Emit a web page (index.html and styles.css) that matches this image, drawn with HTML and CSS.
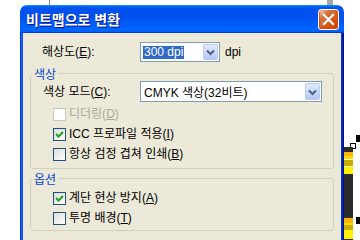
FILE: index.html
```html
<!DOCTYPE html>
<html lang="ko">

<head>
    <meta charset="UTF-8" />
    <title>비트맵으로 변환</title>
    <link rel="stylesheet" href="styles.css">
</head>

<body>
    <div class="desk">
        <!-- bits of the drawing behind the dialog -->
        <div class="guide guide-left"></div>
        <div class="guide guide-right"></div>
        <div class="handle handle-top"></div>
        <div class="node"></div>
        <div class="handle handle-bottom"></div>
        <div class="strip">
            <div class="band dark" style="height:5px"></div>
            <div class="band orange" style="height:4px"></div>
            <div class="band gold" style="height:3px"></div>
            <div class="band pale" style="height:1px"></div>
            <div class="band ochre" style="height:6px"></div>
            <div class="band pale" style="height:1px"></div>
            <div class="band yellow" style="height:7px"></div>
            <div class="band dark" style="height:44px"></div>
            <div class="band orange" style="height:5px"></div>
            <div class="band gold" style="height:2px"></div>
            <div class="band ochre" style="height:5px"></div>
            <div class="band yellow" style="height:9px"></div>
        </div>

        <div class="window">
            <div class="titlebar">
                <span class="title">비트맵으로 변환</span>
                <button class="close" aria-label="닫기">
                    <svg width="19" height="19" viewBox="0 0 19 19">
                        <path d="M5 5 L14 14 M14 5 L5 14" stroke="#fff" stroke-width="2.2" stroke-linecap="square" />
                    </svg>
                </button>
            </div>
            <div class="window-body">
                <div class="top-row">
                    <label class="label res-label">해상도(<u>E</u>):</label>
                    <div class="combo combo-dpi">
                        <span class="combo-text"><span class="selected">300 dpi</span></span>
                        <span class="combo-btn">
                            <svg width="13" height="14" viewBox="0 0 13 14">
                                <path d="M3 5.5 L6.5 9 L10 5.5" fill="none" stroke="#4d6185" stroke-width="2" />
                            </svg>
                        </span>
                    </div>
                    <span class="unit">dpi</span>
                </div>

                <fieldset class="group group-color">
                    <legend>색상</legend>
                    <div class="mode-row">
                        <label class="label mode-label">색상 모드(<u>C</u>):</label>
                        <div class="combo combo-mode">
                            <span class="combo-text">CMYK 색상(32비트)</span>
                            <span class="combo-btn">
                                <svg width="13" height="14" viewBox="0 0 13 14">
                                    <path d="M3 5.5 L6.5 9 L10 5.5" fill="none" stroke="#4d6185" stroke-width="2" />
                                </svg>
                            </span>
                        </div>
                    </div>
                    <div class="checks">
                        <label class="check disabled"><span class="box"></span>디더링(<u>D</u>)</label>
                        <label class="check"><span class="box"><svg width="11" height="11" viewBox="0 0 11 11"><path d="M2 5 L4.5 7.5 L9 3" fill="none" stroke="#21a121" stroke-width="2" /></svg></span>ICC 프로파일 적용(<u>I</u>)</label>
                        <label class="check"><span class="box"></span>항상 검정 겹쳐 인쇄(<u>B</u>)</label>
                    </div>
                </fieldset>

                <fieldset class="group group-option">
                    <legend>옵션</legend>
                    <div class="checks">
                        <label class="check"><span class="box"><svg width="11" height="11" viewBox="0 0 11 11"><path d="M2 5 L4.5 7.5 L9 3" fill="none" stroke="#21a121" stroke-width="2" /></svg></span>계단 현상 방지(<u>A</u>)</label>
                        <label class="check"><span class="box"></span>투명 배경(<u>T</u>)</label>
                    </div>
                </fieldset>
            </div>
        </div>
    </div>
</body>

</html>
```

FILE: styles.css
```css
body {
    margin: 0;
    background: #fff;
    font-family: "Liberation Sans", "Noto Sans CJK KR", sans-serif;
    font-size: 12px;
    color: #000;
}

.desk {
    position: relative;
    width: 360px;
    height: 240px;
    overflow: hidden;
}

/* drawing behind the dialog */
.guide {
    position: absolute;
    top: 0;
    height: 6px;
    background: #8c8c8c;
}

.guide-left {
    left: 49px;
    width: 1px;
}

.guide-right {
    left: 327px;
    width: 6px;
    background: #a6a6a6;
}

.handle {
    position: absolute;
    left: 356px;
    width: 5px;
    height: 7px;
    background: #000;
}

.handle-top {
    top: 135px;
}

.handle-bottom {
    top: 217px;
}

.node {
    position: absolute;
    left: 350px;
    top: 143px;
    width: 4px;
    height: 4px;
    border: 1px solid #000;
    background: #fff;
}

.strip {
    position: absolute;
    left: 344px;
    top: 147px;
    width: 9px;
    height: 93px;
    display: flex;
    flex-direction: column;
    background: #2b2b2b;
}

.band { flex: none; }
.dark { background: #2b2b2b; }
.orange { background: #f9b800; }
.gold { background: #ffd800; }
.pale { background: #fff8c8; }
.ochre { background: #c9ac00; }
.yellow { background: #fff200; }

/* dialog window */
.window {
    position: absolute;
    left: 20px;
    top: 5px;
    width: 324px;
    height: 250px;
    display: flex;
    flex-direction: column;
}

.titlebar {
    flex: none;
    height: 28px;
    box-sizing: border-box;
    padding: 0 5px 0 6px;
    display: flex;
    align-items: center;
    justify-content: space-between;
    border-radius: 7px 7px 0 0;
    background: linear-gradient(180deg, #0997ff, #0053ee 8%, #0050ee 40%, #06f 88%, #06f 93%, #005bff 95%, #003dd7 96%, #003dd7);
}

.title {
    color: #fff;
    font-family: "Noto Sans CJK KR", sans-serif;
    font-weight: bold;
    font-size: 14px;
    line-height: 16px;
    text-shadow: 1px 1px #0f1089;
}

.close {
    width: 21px;
    height: 21px;
    padding: 0;
    display: flex;
    align-items: center;
    justify-content: center;
    border: 1px solid #fff;
    border-radius: 3px;
    background: radial-gradient(circle at 90% 90%, #cc4600 0, #dc6527 55%, #cd7546 70%, #ffccb2 90%, #fff 100%);
    box-shadow: inset 0 -1px 2px 1px #da4600;
}

.window-body {
    flex: 1;
    padding: 0 3px;
    background: #ece9d8;
    box-shadow: inset 1px 0 #0831d9, inset 2px 0 #166aee, inset 3px 0 #0855dd,
        inset -1px 0 #00138c, inset -2px 0 #001ea0, inset -3px 0 #003bda;
}

.label {
    line-height: 14px;
}

u {
    text-decoration-thickness: 1px;
    text-underline-offset: 1px;
}

.top-row {
    margin-top: 9px;
    padding-left: 19px;
    height: 20px;
    display: flex;
    align-items: center;
}

.res-label {
    width: 98px;
}

.combo {
    box-sizing: border-box;
    display: flex;
    align-items: stretch;
    border: 1px solid #7f9db9;
    background: #fff;
}

.combo-dpi {
    width: 80px;
    height: 20px;
}

.combo-mode {
    width: 182px;
    height: 21px;
}

.combo-text {
    flex: 1;
    display: flex;
    align-items: center;
    padding-left: 3px;
    font-size: 12px;
    white-space: nowrap;
}

.combo-dpi .combo-text {
    padding-left: 2px;
}

.selected {
    background: #316ac5;
    color: #fff;
    line-height: 13px;
    padding: 0 1px;
}

.combo-btn {
    width: 15px;
    margin: 1px;
    display: flex;
    align-items: center;
    justify-content: center;
    box-sizing: border-box;
    border: 1px solid #bccbef;
    border-radius: 2px;
    background: linear-gradient(180deg, #e2eafe, #c6d5fb 60%, #b4c7f5);
}

.unit {
    margin-left: 5px;
}

.group {
    margin: 0 7px;
    padding: 0 0 7px;
    min-width: 0;
    border: 1px solid #d0d0bf;
    border-radius: 3px;
}

.group legend {
    margin-left: 1px;
    padding: 0 2px;
    line-height: 15px;
    color: #0046d5;
    font-family: "Noto Sans CJK KR", sans-serif;
}

.group-color {
    margin-top: 4px;
}

.group-option {
    margin-top: 2px;
    padding-bottom: 5px;
}

.mode-row {
    height: 21px;
    padding-left: 12px;
    display: flex;
    align-items: center;
}

.mode-label {
    width: 97px;
}

.checks {
    margin-top: 6px;
    padding-left: 22px;
    display: flex;
    flex-direction: column;
    gap: 7px;
}

.check {
    height: 13px;
    line-height: 13px;
    display: flex;
    align-items: center;
    white-space: nowrap;
}

.box {
    flex: none;
    width: 13px;
    height: 13px;
    box-sizing: border-box;
    margin-right: 3px;
    display: flex;
    align-items: center;
    justify-content: center;
    border: 1px solid #1c5180;
    background: linear-gradient(135deg, #dcdcd7, #fff);
}

.check.disabled {
    color: #aca899;
}

.check.disabled .box {
    border-color: #cac8bb;
    background: #fff;
}
```
